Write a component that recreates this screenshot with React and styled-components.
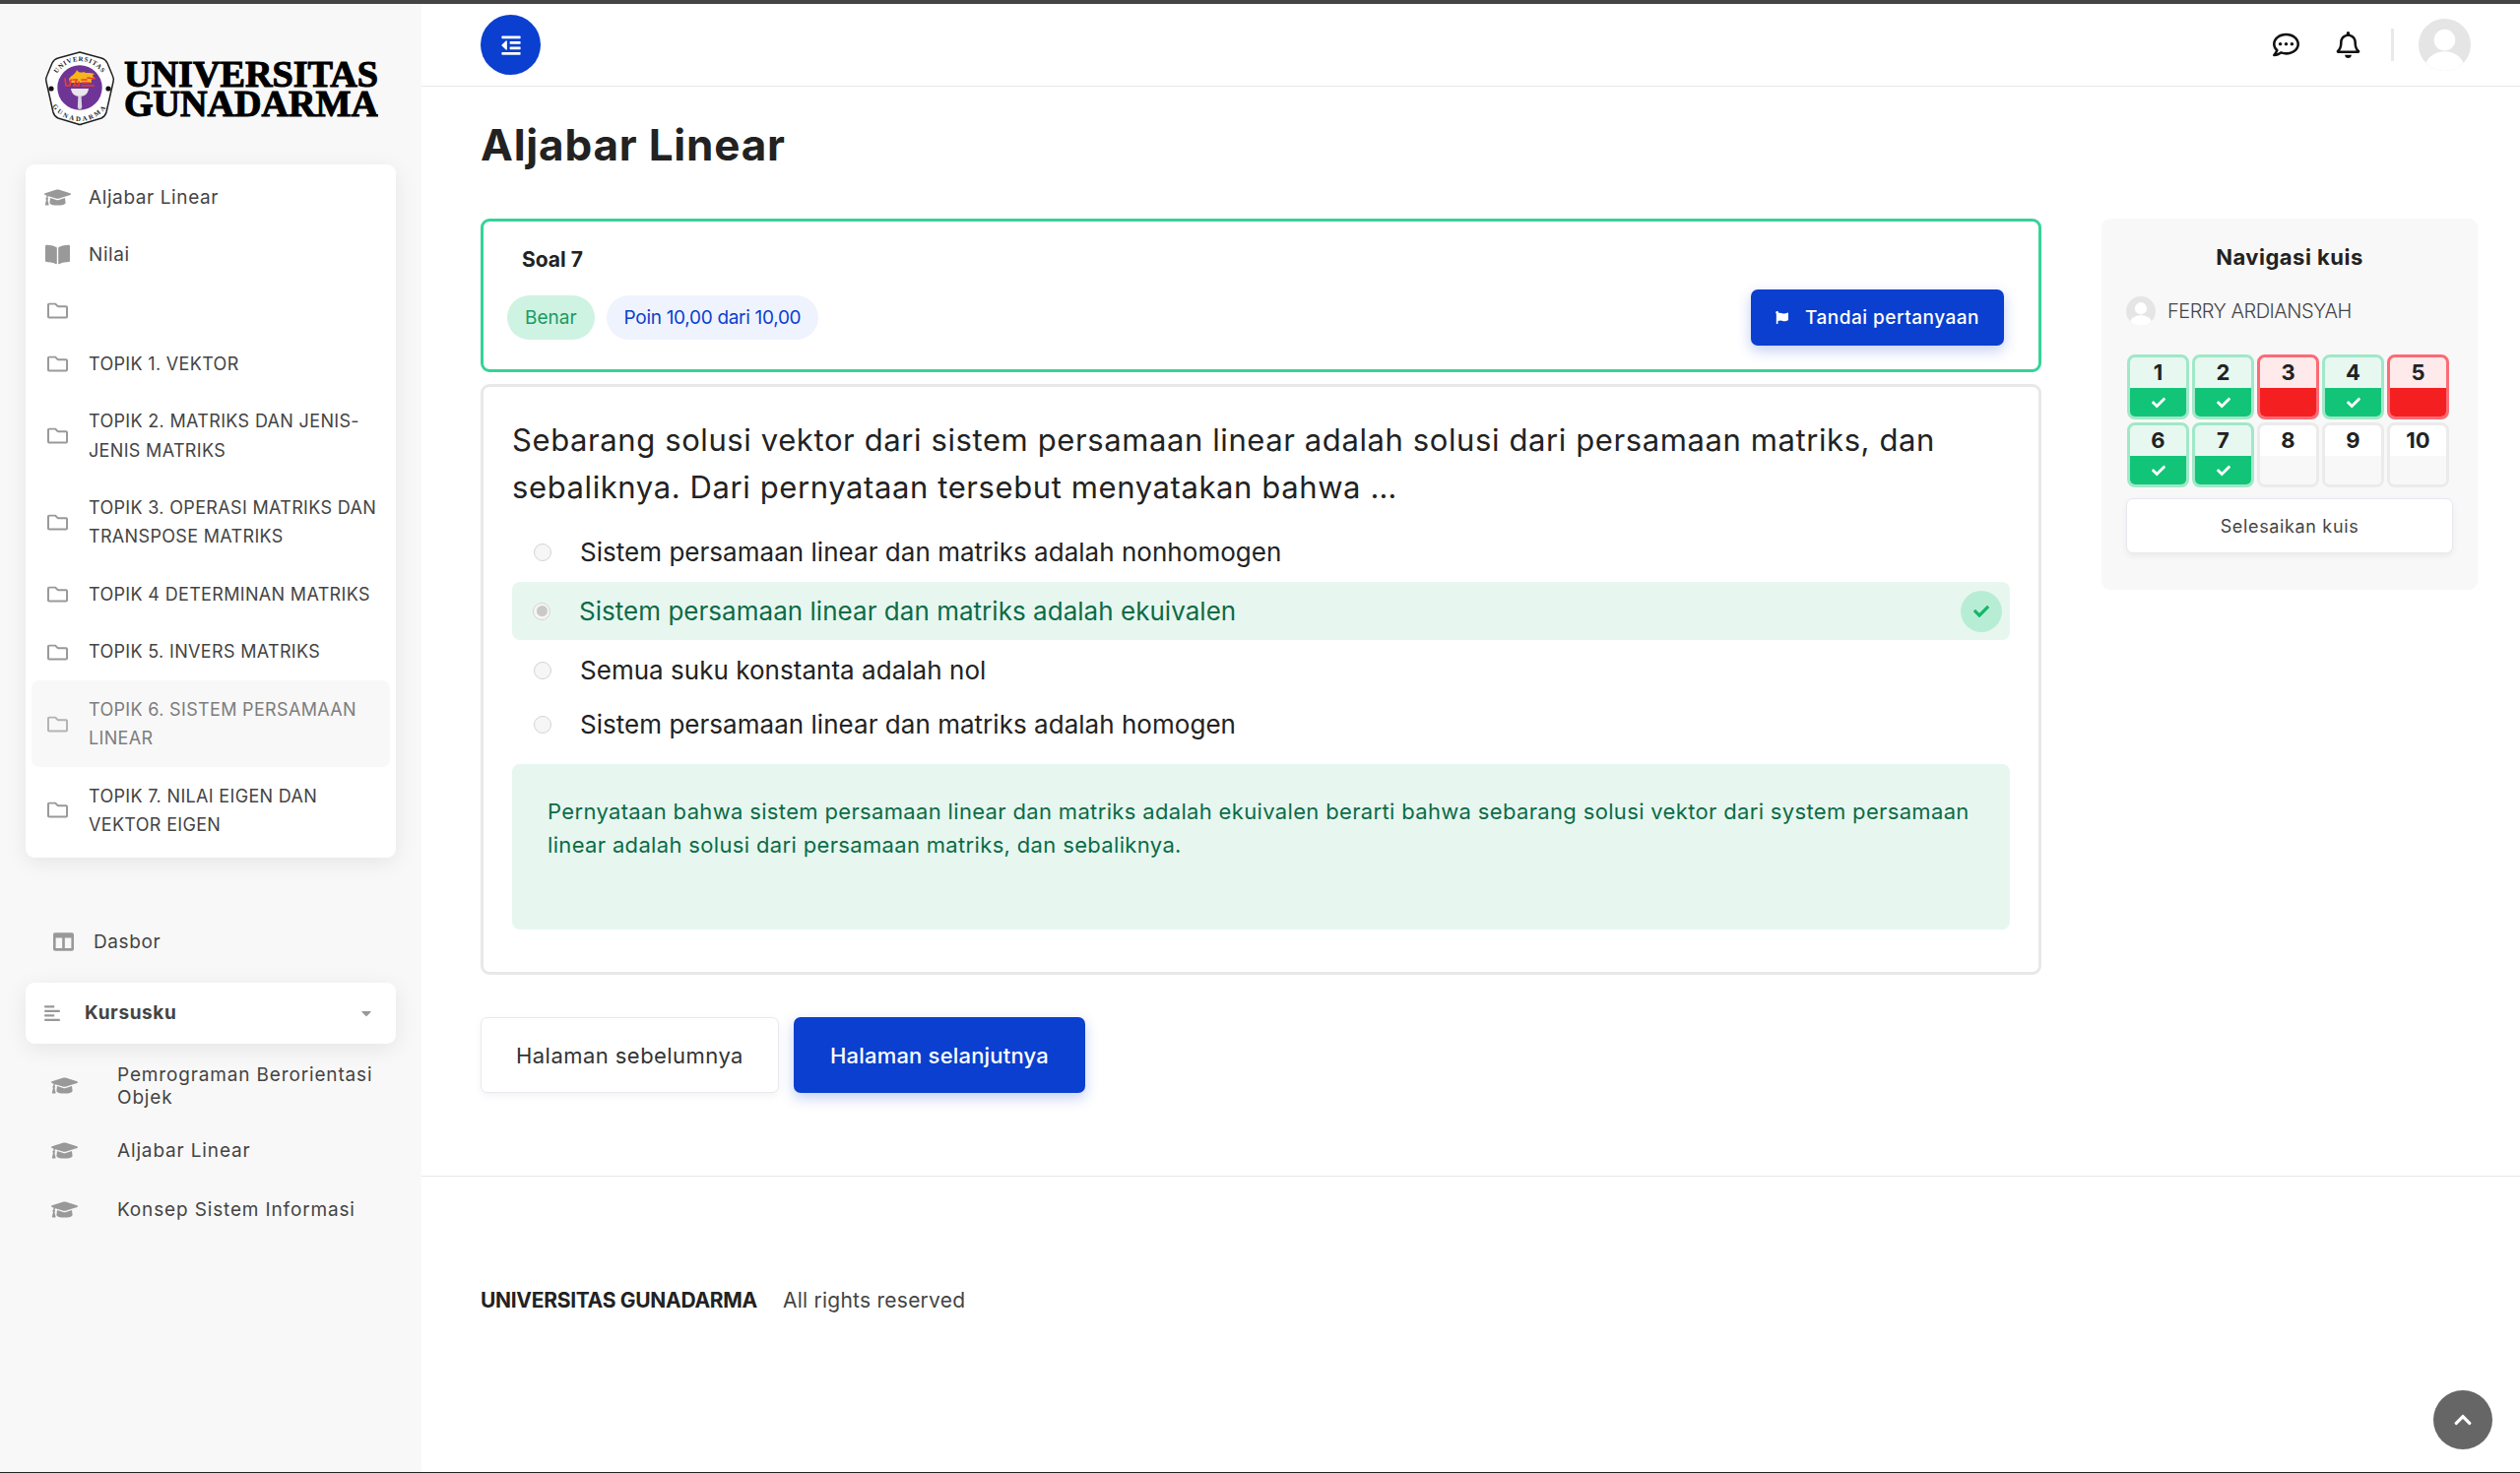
import styled, { createGlobalStyle } from "styled-components";
import {
  FaAlignLeft,
  FaBookOpen,
  FaCaretDown,
  FaCheck,
  FaChevronUp,
  FaColumns,
  FaFlag,
  FaGraduationCap,
  FaOutdent,
  FaRegBell,
  FaRegCommentDots,
  FaRegFolder,
} from "react-icons/fa";

const FONT = '"Inter", "Open Sans", "Liberation Sans", sans-serif';
const BLUE = "#0a3fcf";

const GlobalStyle = createGlobalStyle`
  html, body {
    margin: 0;
    padding: 0;
    background: #fff;
  }
  body {
    font-family: ${FONT};
    color: #222;
  }
  * {
    box-sizing: border-box;
  }
`;

const topics = [
  { label: "" },
  { label: "TOPIK 1. VEKTOR" },
  { label: "TOPIK 2. MATRIKS DAN JENIS-JENIS MATRIKS" },
  { label: "TOPIK 3. OPERASI MATRIKS DAN TRANSPOSE MATRIKS" },
  { label: "TOPIK 4 DETERMINAN MATRIKS" },
  { label: "TOPIK 5. INVERS MATRIKS" },
  { label: "TOPIK 6. SISTEM PERSAMAAN LINEAR", active: true },
  { label: "TOPIK 7. NILAI EIGEN DAN VEKTOR EIGEN" },
];

const courses = [
  "Pemrograman Berorientasi Objek",
  "Aljabar Linear",
  "Konsep Sistem Informasi",
];

const options = [
  { text: "Sistem persamaan linear dan matriks adalah nonhomogen" },
  { text: "Sistem persamaan linear dan matriks adalah ekuivalen", correct: true },
  { text: "Semua suku konstanta adalah nol" },
  { text: "Sistem persamaan linear dan matriks adalah homogen" },
];

const quizCells = [
  { n: 1, state: "ok" },
  { n: 2, state: "ok" },
  { n: 3, state: "bad" },
  { n: 4, state: "ok" },
  { n: 5, state: "bad" },
  { n: 6, state: "ok" },
  { n: 7, state: "ok" },
  { n: 8, state: "none" },
  { n: 9, state: "none" },
  { n: 10, state: "none" },
];

const cellColors = {
  ok: { border: "#a0e8c8", top: "#e7f8f0", bottom: "#12c478" },
  bad: { border: "#fb6b75", top: "#fee9eb", bottom: "#f41f20" },
  none: { border: "#ebebeb", top: "#ffffff", bottom: "#f8f8f8" },
};

const Seal = () => (
  <svg width="72" height="76" viewBox="0 0 72 76">
    <defs>
      <path id="sealTop" d="M9 37 A27 27 0 0 1 63 37" />
      <path id="sealBottom" d="M3 38 A33 33 0 0 0 69 38" />
    </defs>
    <path
      d="M36 1 L58 7 Q62 8 64 12 L69 24 Q71 28 70 31 L63 62 Q62 66 58 68 L38 74 Q36 75 34 74 L14 68 Q10 66 9 62 L2 31 Q1 28 3 24 L8 12 Q10 8 14 7 Z"
      fill="#fff"
      stroke="#222"
      strokeWidth="1.5"
      strokeLinejoin="round"
    />
    <text fontFamily='"Liberation Serif", serif' fontWeight="700" fontSize="6.8" fill="#222">
      <textPath href="#sealTop" startOffset="50%" textAnchor="middle" letterSpacing="0.8">
        UNIVERSITAS
      </textPath>
    </text>
    <text fontFamily='"Liberation Serif", serif' fontWeight="700" fontSize="6.8" fill="#222">
      <textPath href="#sealBottom" startOffset="50%" textAnchor="middle" letterSpacing="2.2">
        GUNADARMA
      </textPath>
    </text>
    <circle cx="7" cy="38" r="2.6" fill="#111" />
    <circle cx="65" cy="38" r="2.6" fill="#111" />
    <circle cx="36" cy="37" r="22.7" fill="#6f3596" />
    <path d="M25 28 C28 24 31 24 33 19 C35 22 37 22 41 21 C40 23 46 21 51 23 C47 25 50 26 52 28 C46 28 48 30 48 32 L26 32 Z" fill="#f6b51e" />
    <path
      d="M21 28 L22 35 L26 35 L27 29 M29 29 L33 29 L30 35 L35 35 L35 31 M38 29 L43 29 M38 32 L46 32 M38 35 L50 35 M44 27 L51 28"
      fill="none"
      stroke="#ea3f2b"
      strokeWidth="1.7"
      strokeLinecap="round"
    />
    <path d="M27 38 H45 C44.5 43 41 46 36 46 C31 46 27.5 43 27 38 Z" fill="#e9e6ee" />
    <path d="M34.4 46 H37.6 L38.2 56 Q38.2 59 36 59 Q33.8 59 33.8 56 Z" fill="#d9d6de" />
  </svg>
);

const Wordmark = () => (
  <WordSvg width="258" height="76" viewBox="0 0 258 76">
    <WordText x="0" y="35" textLength="258" lengthAdjust="spacingAndGlyphs">
      UNIVERSITAS
    </WordText>
    <WordText x="0" y="65" textLength="258" lengthAdjust="spacingAndGlyphs">
      GUNADARMA
    </WordText>
  </WordSvg>
);

const Avatar = ({ size }) => (
  <svg width={size} height={size} viewBox="0 0 54 54">
    <defs>
      <clipPath id={`avatar${size}`}>
        <circle cx="27" cy="27" r="27" />
      </clipPath>
    </defs>
    <g clipPath={`url(#avatar${size})`}>
      <rect width="54" height="54" fill="#e5e5e5" />
      <circle cx="27" cy="22" r="11" fill="#fff" />
      <ellipse cx="27" cy="50" rx="20" ry="16" fill="#fff" />
    </g>
  </svg>
);

const App = () => {
  return (
    <>
      <GlobalStyle />
      <Page>
        <Sidebar>
          <LogoRow>
            <Seal />
            <Wordmark />
          </LogoRow>

          <Card>
            <NavRow $mixed>
              <IconSlot>
                <FaGraduationCap size={27} />
              </IconSlot>
              <span>Aljabar Linear</span>
            </NavRow>
            <NavRow $mixed>
              <IconSlot>
                <FaBookOpen size={25} />
              </IconSlot>
              <span>Nilai</span>
            </NavRow>
            {topics.map((topic, i) => (
              <NavRow key={i} $active={topic.active} $empty={!topic.label}>
                <IconSlot>
                  <FaRegFolder size={21} />
                </IconSlot>
                <span>{topic.label}</span>
              </NavRow>
            ))}
          </Card>

          <DashRow>
            <FaColumns size={21} />
            <span>Dasbor</span>
          </DashRow>

          <CoursesCard>
            <FaAlignLeft size={18} />
            <strong>Kursusku</strong>
            <FaCaretDown size={16} />
          </CoursesCard>

          <CourseList>
            {courses.map((course) => (
              <CourseRow key={course}>
                <FaGraduationCap size={27} />
                <span>{course}</span>
              </CourseRow>
            ))}
          </CourseList>
        </Sidebar>

        <Main>
          <Header>
            <MenuButton>
              <FaOutdent size={22} />
            </MenuButton>
            <HeaderTools>
              <FaRegCommentDots size={27} />
              <FaRegBell size={27} />
              <Divider />
              <Avatar size={53} />
            </HeaderTools>
          </Header>

          <Title>Aljabar Linear</Title>

          <Content>
            <Column>
              <InfoBox>
                <div>
                  <QuestionNo>Soal 7</QuestionNo>
                  <Pills>
                    <Pill $green>Benar</Pill>
                    <Pill>Poin 10,00 dari 10,00</Pill>
                  </Pills>
                </div>
                <FlagButton>
                  <FaFlag size={13} />
                  Tandai pertanyaan
                </FlagButton>
              </InfoBox>

              <QuestionBox>
                <QuestionText>
                  Sebarang solusi vektor dari sistem persamaan linear adalah solusi dari persamaan matriks, dan
                  sebaliknya. Dari pernyataan tersebut menyatakan bahwa …
                </QuestionText>
                <Options>
                  {options.map((option) => (
                    <Option key={option.text} $correct={option.correct}>
                      <Radio $checked={option.correct} />
                      <span>{option.text}</span>
                      {option.correct && (
                        <CheckBadge>
                          <FaCheck size={16} />
                        </CheckBadge>
                      )}
                    </Option>
                  ))}
                </Options>
                <Feedback>
                  Pernyataan bahwa sistem persamaan linear dan matriks adalah ekuivalen berarti bahwa sebarang solusi
                  vektor dari system persamaan linear adalah solusi dari persamaan matriks, dan sebaliknya.
                </Feedback>
              </QuestionBox>

              <PageButtons>
                <PageButton>Halaman sebelumnya</PageButton>
                <PageButton $primary>Halaman selanjutnya</PageButton>
              </PageButtons>
            </Column>

            <QuizNav>
              <QuizTitle>Navigasi kuis</QuizTitle>
              <QuizUser>
                <Avatar size={30} />
                <span>FERRY ARDIANSYAH</span>
              </QuizUser>
              <QuizGrid>
                {quizCells.map((cell) => (
                  <QuizCell key={cell.n} $state={cell.state}>
                    <span>{cell.n}</span>
                    <div>{cell.state === "ok" && <FaCheck size={14} />}</div>
                  </QuizCell>
                ))}
              </QuizGrid>
              <FinishButton>Selesaikan kuis</FinishButton>
            </QuizNav>
          </Content>

          <Footer>
            <strong>UNIVERSITAS GUNADARMA</strong>
            <span>All rights reserved</span>
          </Footer>
        </Main>

        <ScrollTop>
          <FaChevronUp size={20} />
        </ScrollTop>
      </Page>
    </>
  );
};

export default App;

const Page = styled.div`
  display: grid;
  grid-template-columns: 428px 1fr;
  min-height: 1496px;
  border-top: 4px solid #444;
  border-bottom: 1px solid #222;
`;

const Sidebar = styled.aside`
  background: #f8f8f8;
  padding: 48px 26px 0;
`;

const LogoRow = styled.div`
  display: flex;
  align-items: flex-start;
  gap: 9px;
  height: 75px;
  margin: 0 0 40px 19px;
`;

const WordSvg = styled.svg`
  flex-shrink: 0;
  margin-top: 1px;
`;

const WordText = styled.text`
  font-family: "Liberation Serif", serif;
  font-weight: 700;
  font-size: 38px;
  fill: #000;
  stroke: #000;
  stroke-width: 1.1px;
`;

const Card = styled.div`
  background: #fff;
  border-radius: 9px;
  padding: 4px 6px;
  box-shadow: 0 5px 22px rgba(0, 0, 0, 0.08);
`;

const NavRow = styled.div`
  display: flex;
  align-items: center;
  gap: 21px;
  padding: ${(p) => (p.$empty ? "2px 10px 0 16px" : "14.65px 10px 14.65px 16px")};
  min-height: ${(p) => (p.$empty ? "52px" : "58.55px")};
  border-radius: 8px;
  background: ${(p) => (p.$active ? "#f8f8f8" : "transparent")};
  color: ${(p) => (p.$active ? "#7d7d7d" : "#444")};
  font-size: ${(p) => (p.$mixed ? "19px" : "18px")};
  line-height: 29.25px;
  letter-spacing: ${(p) => (p.$mixed ? "0.6px" : "0.33px")};

  svg {
    color: ${(p) => (p.$active ? "#b3b3b3" : "#999")};
  }
`;

const IconSlot = styled.span`
  display: flex;
  justify-content: center;
  flex: 0 0 21px;
  width: 21px;

  svg {
    flex-shrink: 0;
  }
`;

const DashRow = styled.div`
  display: flex;
  align-items: center;
  gap: 20px;
  height: 58px;
  margin-top: 57px;
  padding-left: 28px;
  color: #444;
  font-size: 19px;
  letter-spacing: 0.6px;

  svg {
    color: #999;
  }
`;

const CoursesCard = styled.div`
  display: flex;
  align-items: center;
  height: 62px;
  margin-top: 12px;
  padding: 0 22px 0 18px;
  background: #fff;
  border-radius: 9px;
  box-shadow: 0 5px 22px rgba(0, 0, 0, 0.08);
  color: #444;
  font-size: 19px;

  svg {
    color: #999;
  }

  strong {
    flex: 1;
    margin-left: 24px;
    font-weight: 700;
    letter-spacing: 0.6px;
  }
`;

const CourseList = styled.div`
  display: flex;
  flex-direction: column;
  margin-top: 13px;
`;

const CourseRow = styled.div`
  display: flex;
  align-items: center;
  gap: 40px;
  min-height: 60px;
  padding-left: 26px;
  color: #444;
  font-size: 19px;
  line-height: 23px;
  letter-spacing: 0.85px;

  &:first-child {
    margin-bottom: 6px;
  }

  svg {
    flex-shrink: 0;
    color: #999;
  }
`;

const Main = styled.main`
  display: flex;
  flex-direction: column;
  min-width: 0;
`;

const Header = styled.header`
  display: flex;
  align-items: center;
  justify-content: space-between;
  height: 84px;
  padding: 0 50px 0 60px;
  border-bottom: 1px solid #e8e8e8;
`;

const MenuButton = styled.div`
  display: flex;
  align-items: center;
  justify-content: center;
  width: 61px;
  height: 61px;
  border-radius: 50%;
  background: ${BLUE};
  color: #fff;
`;

const HeaderTools = styled.div`
  display: flex;
  align-items: center;
  gap: 38px;
  color: #111;

  svg:nth-child(1) {
    margin-right: -2px;
  }

  svg:nth-child(2) {
    margin-right: -8px;
  }
`;

const Divider = styled.span`
  width: 3px;
  height: 33px;
  margin-right: -13px;
  background: #e8e8e8;
`;

const Title = styled.h1`
  margin: 26px 0 42px 60px;
  font-size: 44px;
  line-height: 66px;
  font-weight: 700;
  color: #222;
  letter-spacing: 0.8px;
`;

const Content = styled.div`
  display: flex;
  align-items: flex-start;
  gap: 61px;
  padding: 0 43px 0 60px;
`;

const Column = styled.div`
  flex: 1;
  min-width: 0;
`;

const InfoBox = styled.section`
  display: flex;
  justify-content: space-between;
  height: 156px;
  padding: 24px 35px 24px 24px;
  border: 3px solid #35d399;
  border-radius: 9px;
`;

const QuestionNo = styled.div`
  margin-left: 15px;
  font-size: 21px;
  line-height: 30px;
  font-weight: 700;
  color: #222;
`;

const Pills = styled.div`
  display: flex;
  gap: 12px;
  margin-top: 21px;
`;

const Pill = styled.span`
  display: flex;
  align-items: center;
  height: 45px;
  padding: 0 18px;
  border-radius: 23px;
  font-size: 19px;
  letter-spacing: ${(p) => (p.$green ? "0" : "-0.3px")};
  background: ${(p) => (p.$green ? "#cff3e3" : "#eff3fe")};
  color: ${(p) => (p.$green ? "#1a9a62" : BLUE)};
`;

const FlagButton = styled.div`
  display: flex;
  align-items: center;
  gap: 17px;
  align-self: flex-end;
  height: 57px;
  padding: 0 25px;
  border-radius: 7px;
  background: ${BLUE};
  color: #fff;
  font-size: 19px;
  font-weight: 500;
  letter-spacing: 0.5px;
  box-shadow: 0 5px 14px rgba(10, 63, 207, 0.25);
`;

const QuestionBox = styled.section`
  margin-top: 12px;
  padding: 30px 29px 43px;
  border: 3px solid #e8e8e8;
  border-radius: 9px;
`;

const QuestionText = styled.p`
  margin: 0 0 14px;
  font-size: 31px;
  line-height: 48px;
  letter-spacing: 0.6px;
  color: #222;
`;

const Options = styled.div`
  display: flex;
  flex-direction: column;
`;

const Option = styled.div`
  display: flex;
  align-items: center;
  gap: 29px;
  height: ${(p) => (p.$correct ? "59px" : "55px")};
  margin: ${(p) => (p.$correct ? "3px 0" : "0")};
  padding: 0 8px 0 ${(p) => (p.$correct ? "21px" : "22px")};
  border-radius: 8px;
  background: ${(p) => (p.$correct ? "#e7f7ef" : "transparent")};
  color: ${(p) => (p.$correct ? "#0c6b48" : "#222")};
  font-size: 26px;
  letter-spacing: 0.03px;

  span:nth-child(2) {
    flex: 1;
  }
`;

const Radio = styled.span`
  position: relative;
  flex: 0 0 18px;
  height: 18px;
  border: 1.5px solid #d4d4d4;
  border-radius: 50%;
  background: #f6f6f6;

  &::after {
    content: "";
    display: ${(p) => (p.$checked ? "block" : "none")};
    position: absolute;
    inset: 2.5px;
    border-radius: 50%;
    background: #c9c9c9;
  }
`;

const CheckBadge = styled.span`
  display: flex;
  align-items: center;
  justify-content: center;
  width: 42px;
  height: 42px;
  border-radius: 50%;
  background: #b8edd5;
  color: #12b76a;
`;

const Feedback = styled.div`
  height: 168px;
  margin-top: 13px;
  padding: 32px 35px 0 36px;
  border-radius: 8px;
  background: #e7f7ef;
  color: #0c6b48;
  font-size: 22px;
  line-height: 33.5px;
  letter-spacing: 0.34px;
`;

const PageButtons = styled.div`
  display: flex;
  gap: 15px;
  margin-top: 43px;
`;

const PageButton = styled.div`
  display: flex;
  align-items: center;
  height: 77px;
  padding: 0 ${(p) => (p.$primary ? "37px" : "35px")};
  border-radius: 7px;
  font-size: 22px;
  letter-spacing: ${(p) => (p.$primary ? "0.2px" : "0.45px")};
  font-weight: ${(p) => (p.$primary ? 500 : 400)};
  border: ${(p) => (p.$primary ? "none" : "1px solid #e6e9f0")};
  background: ${(p) => (p.$primary ? BLUE : "#fff")};
  color: ${(p) => (p.$primary ? "#fff" : "#333")};
  box-shadow: ${(p) => (p.$primary ? "0 5px 14px rgba(10, 63, 207, 0.25)" : "0 3px 8px rgba(0, 0, 0, 0.05)")};
`;

const QuizNav = styled.aside`
  flex: 0 0 382px;
  height: 377px;
  padding: 23px 25px;
  border-radius: 9px;
  background: #f8f8f8;
`;

const QuizTitle = styled.h2`
  margin: 0;
  text-align: center;
  font-size: 22px;
  line-height: 32px;
  font-weight: 700;
  letter-spacing: 0.5px;
  color: #222;
`;

const QuizUser = styled.div`
  display: flex;
  align-items: center;
  gap: 12px;
  margin-top: 24px;
  color: #444;
  font-size: 20px;
  font-weight: 300;
  letter-spacing: -0.5px;
`;

const QuizGrid = styled.div`
  display: grid;
  grid-template-columns: repeat(5, 63px);
  gap: 3px;
  margin: 29px 0 11px 1px;
`;

const QuizCell = styled.div`
  display: flex;
  flex-direction: column;
  height: 66px;
  overflow: hidden;
  border: 3px solid ${(p) => cellColors[p.$state].border};
  border-radius: 8px;
  font-size: 22px;
  font-weight: 700;
  color: #222;
  background: ${(p) => cellColors[p.$state].top};

  span {
    flex: 0 0 30px;
    line-height: 31px;
    text-align: center;
  }

  div {
    flex: 1;
    display: flex;
    align-items: center;
    justify-content: center;
    color: #fff;
    background: ${(p) => cellColors[p.$state].bottom};
  }
`;

const FinishButton = styled.div`
  display: flex;
  align-items: center;
  justify-content: center;
  height: 56px;
  border: 1px solid #e6e9f0;
  border-radius: 7px;
  background: #fff;
  color: #444;
  font-size: 18px;
  letter-spacing: 0.65px;
  box-shadow: 0 3px 6px rgba(0, 0, 0, 0.06);
`;

const Footer = styled.footer`
  display: flex;
  align-items: center;
  gap: 26px;
  margin-top: 84px;
  padding: 110px 60px 0;
  border-top: 1px solid #e8e8e8;
  font-size: 21px;
  line-height: 32px;
  letter-spacing: 0.25px;
  color: #444;

  strong {
    font-weight: 700;
    letter-spacing: -0.3px;
    color: #222;
  }
`;

const ScrollTop = styled.div`
  position: fixed;
  right: 28px;
  bottom: 24px;
  display: flex;
  align-items: center;
  justify-content: center;
  width: 60px;
  height: 60px;
  border-radius: 50%;
  background: #666;
  color: #fff;
`;
